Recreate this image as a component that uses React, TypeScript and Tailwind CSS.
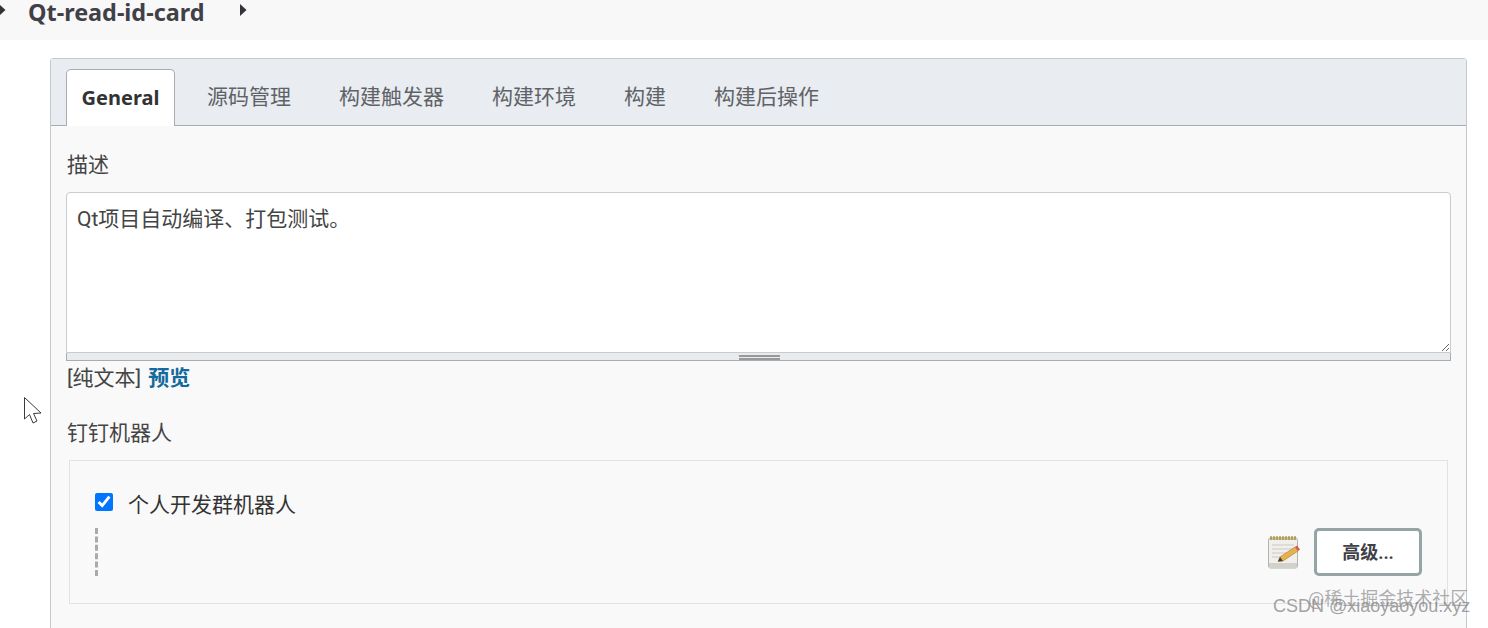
const cjk = "font-['Roboto','Noto_Sans_CJK_SC',sans-serif]";
const latinBold = "font-['Noto_Sans','Noto_Sans_CJK_SC',sans-serif]";

const tabs = ["源码管理", "构建触发器", "构建环境", "构建", "构建后操作"];

function Caret({ className }: { className: string }) {
  return (
    <svg className={className} width="7" height="12" viewBox="0 0 7 12">
      <path d="M0 0 L6.5 6 L0 12 Z" fill="#33333a" />
    </svg>
  );
}

function Notepad() {
  return (
    <svg width="36" height="36" viewBox="0 0 36 36">
      <rect x="2.5" y="4" width="29" height="30" rx="2" fill="#f0efec" stroke="#b3b3ae" />
      <rect x="3" y="29" width="28" height="5" fill="#d2d2cd" />
      <rect x="4" y="3" width="26" height="3" fill="#d8c98a" />
      <path d="M5 2v4M8 2v4M11 2v4M14 2v4M17 2v4M20 2v4M23 2v4M26 2v4M29 2v4" stroke="#8d7d45" strokeWidth="1.1" />
      <path d="M6 11h22M6 15h22M6 19h17M6 23h9" stroke="#c9c9c4" strokeWidth="1.2" />
      <path d="M12 27.5 L14 23 L29 13 L32 17 L17 27 Z" fill="#e6b24e" stroke="#a67c33" strokeWidth="0.6" />
      <path d="M29 13 L31 11.5 L34 15.5 L32 17 Z" fill="#d9584c" />
      <path d="M12 27.5 L14 23 L17 27 Z" fill="#4a4236" />
    </svg>
  );
}

function Cursor() {
  return (
    <svg className="absolute left-[23px] top-[396px]" width="20" height="30" viewBox="0 0 20 30">
      <path d="M1.5 1.5 V23 L6.5 18.5 L10 27 L14 25 L10.5 17.5 L18 17 Z" fill="#fff" stroke="#3a3a3a" strokeWidth="1" strokeLinejoin="round" />
    </svg>
  );
}

export default function App() {
  return (
    <div className={`relative h-[628px] overflow-hidden bg-white text-[#333] ${cjk}`}>
      <div className="relative flex h-10 items-start bg-[#f8f8f8]">
        <Caret className="absolute -left-[1px] top-[4px]" />
        <span className={`ml-7 text-[23.4px] leading-[24px] font-bold text-[#3f4048] ${latinBold}`}>Qt-read-id-card</span>
        <Caret className="ml-[36px] mt-[4px]" />
      </div>

      <div className="ml-[50px] mr-[21px] mt-[18px] h-[600px] rounded-t-[3px] border border-[#c5c9cc] bg-[#f9f9fa]">
        <div className="flex h-[67px] items-end border-b border-[#a9adb0] bg-[#e9ecf0] pl-[15px]">
          <div className={`-mb-px flex h-[57px] w-[109px] items-center justify-center rounded-t-[5px] border border-b-0 border-[#a9adb0] bg-white text-[20px] font-bold text-[#333] ${latinBold}`}>
            General
          </div>
          <div className="ml-[32px] flex h-[57px] items-center gap-[48px] pt-[3px] text-[21px] text-[#5f6368]">
            {tabs.map((t) => (
              <span key={t}>{t}</span>
            ))}
          </div>
        </div>

        <div className="px-[15px]">
          <div className="mt-[25px] h-[29px] pl-px text-[21px] leading-[29px] text-[#444]">描述</div>
          <div className="mt-[12px]">
            <textarea
              readOnly
              defaultValue="Qt项目自动编译、打包测试。"
              className="block h-[161px] w-full resize-y rounded-t-[4px] border border-[#c9cccf] bg-white px-[10px] py-[12px] text-[21px] leading-[29px] text-[#444] outline-none"
            />
            <div className="flex h-2 w-full items-end justify-center border-x border-b border-[#a9adb0] bg-[#e9ebec]">
              <div className="ml-[2px] h-[5px] w-[41px] border-y-2 border-[#999]" />
            </div>
          </div>
          <div className="mt-[3px] pl-px text-[21px] leading-[29px] text-[#444]">
            [纯文本]<span className="ml-[7px] font-bold text-[#13699c]">预览</span>
          </div>
          <div className="mt-[26px] h-[29px] pl-px text-[21px] leading-[29px] text-[#444]">钉钉机器人</div>

          <div className="mx-[3px] mt-[12px] flex h-[144px] flex-col border border-[#e0e2e4] px-[25px] pt-[30px]">
            <label className="flex items-start text-[21px] leading-[29px] text-[#333]">
              <input type="checkbox" checked readOnly className="m-0 mt-[2px] h-[18px] w-[18px] accent-[#0075ff]" />
              <span className="ml-[15px]">个人开发群机器人</span>
            </label>
            <div className="mt-[8px] flex items-start justify-between">
              <div className="h-[48px] border-l-[3px] border-dashed border-[#aaa]" />
              <div className="flex items-center gap-[12px]">
                <Notepad />
                <button className="h-[48px] w-[108px] rounded-[5px] border-[3px] border-[#95a5a6] bg-white text-[18px] font-bold text-[#3f4048]">
                  高级...
                </button>
              </div>
            </div>
          </div>
        </div>
      </div>

      <Cursor />

      <div className="absolute left-[1308px] top-[587px] text-[18px] leading-[24px] text-[#8a8a8a]/70">@稀土掘金技术社区</div>
      <div className="absolute left-[1273px] top-[594px] font-['Liberation_Sans','Noto_Sans_CJK_SC',sans-serif] text-[18px] leading-[24px] text-[#8a8a8a]/80">CSDN @xiaoyaoyou.xyz</div>
    </div>
  );
}
